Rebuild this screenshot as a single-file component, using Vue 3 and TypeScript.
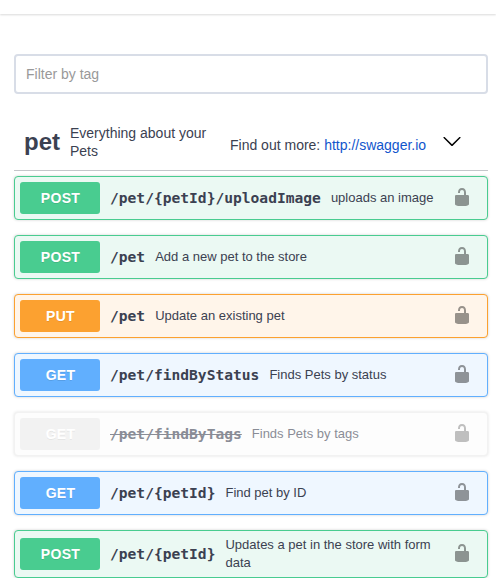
<script setup lang="ts">
interface Operation {
  method: string
  kind: string
  path: string
  summary: string
}

const operations: Operation[] = [
  { method: 'POST', kind: 'post', path: '/pet/{petId}/uploadImage', summary: 'uploads an image' },
  { method: 'POST', kind: 'post', path: '/pet', summary: 'Add a new pet to the store' },
  { method: 'PUT', kind: 'put', path: '/pet', summary: 'Update an existing pet' },
  { method: 'GET', kind: 'get', path: '/pet/findByStatus', summary: 'Finds Pets by status' },
  { method: 'GET', kind: 'deprecated', path: '/pet/findByTags', summary: 'Finds Pets by tags' },
  { method: 'GET', kind: 'get', path: '/pet/{petId}', summary: 'Find pet by ID' },
  { method: 'POST', kind: 'post', path: '/pet/{petId}', summary: 'Updates a pet in the store with form data' },
]
</script>

<template>
  <div class="page">
    <div class="scheme-bar"></div>
    <main class="content">
      <input class="filter" type="text" placeholder="Filter by tag" />
      <header class="tag">
        <h3 class="tag-name">pet</h3>
        <p class="tag-description">Everything about your Pets</p>
        <p class="tag-docs">Find out more: <a href="#">http://swagger.io</a></p>
        <svg class="arrow" width="20" height="20" viewBox="0 0 20 20">
          <path d="M17.418 6.109c.272-.268.709-.268.979 0s.271.701 0 .969l-7.908 7.83c-.27.268-.707.268-.979 0l-7.908-7.83c-.27-.268-.27-.701 0-.969.271-.268.709-.268.979 0L10 13.25l7.418-7.141z" />
        </svg>
      </header>
      <section class="operations">
        <div v-for="(op, i) in operations" :key="i" class="operation" :class="op.kind">
          <span class="method">{{ op.method }}</span>
          <span class="path">{{ op.path }}</span>
          <span class="summary">{{ op.summary }}</span>
          <svg class="lock" width="20" height="20" viewBox="0 0 20 20">
            <path d="M15.8 8H14V5.6C14 2.703 12.665 1 10 1 7.334 1 6 2.703 6 5.6V6h2v-.801C8 3.754 8.797 3 10 3c1.203 0 2 .754 2 2.199V8H4c-.553 0-1 .646-1 1.199V17c0 .549.428 1.139.951 1.307l1.197.387C5.672 18.861 6.55 19 7.1 19h5.8c.549 0 1.428-.139 1.951-.307l1.196-.387c.524-.167.953-.757.953-1.306V9.199C17 8.646 16.352 8 15.8 8z" />
          </svg>
        </div>
      </section>
    </main>
  </div>
</template>

<style>
body {
  margin: 0;
  background: #fff;
}
</style>

<style scoped>
.page {
  height: 578px;
  overflow: hidden;
  font-family: "Liberation Sans", Arial, sans-serif;
  color: #3b4151;
}
.scheme-bar {
  height: 14px;
  box-shadow: 0 1px 2px rgba(0, 0, 0, 0.15);
}
.content {
  padding: 40px 8px 0 14px;
}
.filter {
  display: block;
  box-sizing: border-box;
  width: 100%;
  height: 40px;
  margin: 0;
  padding: 0 10px;
  border: 2px solid #d8dde7;
  border-radius: 4px;
  outline: none;
  background: #fff;
  font-family: inherit;
  font-size: 14px;
}
.filter::placeholder {
  color: #999;
}
.tag {
  display: flex;
  align-items: center;
  height: 56px;
  margin: 20px 0 5px;
  padding: 0 26px 0 10px;
  border-bottom: 1px solid rgba(59, 65, 81, 0.3);
}
.tag-name {
  margin: 0;
  width: 46px;
  font-size: 24px;
  line-height: 28px;
}
.tag-description,
.tag-docs {
  margin: 0;
  font-size: 14px;
  line-height: 18px;
}
.tag-description {
  width: 160px;
}
.tag-docs {
  flex: 1;
  padding-top: 6px;
  white-space: nowrap;
}
.tag-docs a {
  color: #1155cc;
  text-decoration: none;
}
.arrow {
  flex: none;
  margin-bottom: 2px;
}
.operations {
  display: flex;
  flex-direction: column;
  gap: 15px;
}
.operation {
  display: flex;
  align-items: center;
  padding: 5px 15px 5px 5px;
  border: 1px solid var(--accent);
  border-radius: 4px;
  background: var(--tint);
  box-shadow: 0 0 3px rgba(0, 0, 0, 0.19);
}
.post {
  --accent: #49cc90;
  --tint: #ebf9f3;
}
.put {
  --accent: #fca130;
  --tint: #fff5ea;
}
.get {
  --accent: #61affe;
  --tint: #eff7ff;
}
.deprecated {
  --accent: #ebebeb;
  --tint: #fcfcfc;
  opacity: 0.6;
}
.method {
  flex: none;
  width: 80px;
  padding: 8px 0;
  border-radius: 3px;
  background: var(--accent);
  color: #fff;
  font-size: 14px;
  font-weight: 700;
  letter-spacing: 0.3px;
  line-height: 16px;
  text-align: center;
  text-indent: 1px;
  text-shadow: 0 1px 0 rgba(0, 0, 0, 0.1);
}
.path {
  flex: none;
  padding: 0 10px;
  font-family: "DejaVu Sans Mono", monospace;
  font-size: 14.6px;
  font-weight: 700;
  line-height: 18px;
}
.deprecated .path {
  text-decoration: line-through;
}
.summary {
  flex: 1;
  padding-right: 10px;
  font-size: 13px;
  line-height: 18px;
}
.lock {
  flex: none;
  margin-bottom: 2px;
  opacity: 0.4;
}
</style>
